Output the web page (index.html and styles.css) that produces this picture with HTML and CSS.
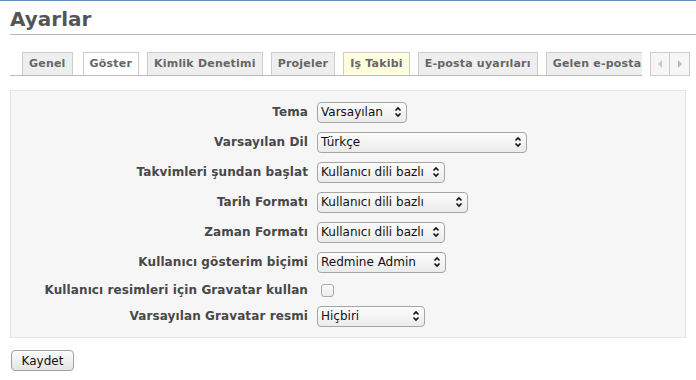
FILE: index.html
```html
<!DOCTYPE html>
<html lang="tr">

<head>
    <meta charset="UTF-8">
    <title>Ayarlar</title>
    <link rel="stylesheet" href="styles.css">
</head>

<body>
    <div class="topline"></div>

    <div id="content">
        <h2>Ayarlar</h2>

        <!-- Tabs -->
        <div class="tabs">
            <ul>
                <li><a>Genel</a></li>
                <li><a class="selected">Göster</a></li>
                <li><a>Kimlik Denetimi</a></li>
                <li><a>Projeler</a></li>
                <li><a class="highlight">Iş Takibi</a></li>
                <li><a>E-posta uyarıları</a></li>
                <li><a>Gelen e-posta</a></li>
            </ul>
            <div class="tab-buttons">
                <button class="tab-left"><svg width="6" height="8" viewBox="0 0 6 8"><path d="M5 0 L1 4 L5 8 Z" fill="#ccc"/></svg></button>
                <button class="tab-right"><svg width="6" height="8" viewBox="0 0 6 8"><path d="M1 0 L5 4 L1 8 Z" fill="#bbb"/></svg></button>
            </div>
        </div>

        <!-- Settings box -->
        <div class="box">
            <p class="row"><label>Tema</label><span class="select w89">Varsayılan<svg class="arr" viewBox="0 0 8 12"><path d="M1.5 4.5 L4 2 L6.5 4.5 M1.5 7.5 L4 10 L6.5 7.5" /></svg></span></p>
            <p class="row"><label>Varsayılan Dil</label><span class="select w209">Türkçe<svg class="arr" viewBox="0 0 8 12"><path d="M1.5 4.5 L4 2 L6.5 4.5 M1.5 7.5 L4 10 L6.5 7.5" /></svg></span></p>
            <p class="row"><label>Takvimleri şundan başlat</label><span class="select w127">Kullanıcı dili bazlı<svg class="arr" viewBox="0 0 8 12"><path d="M1.5 4.5 L4 2 L6.5 4.5 M1.5 7.5 L4 10 L6.5 7.5" /></svg></span></p>
            <p class="row"><label>Tarih Formatı</label><span class="select w150">Kullanıcı dili bazlı<svg class="arr" viewBox="0 0 8 12"><path d="M1.5 4.5 L4 2 L6.5 4.5 M1.5 7.5 L4 10 L6.5 7.5" /></svg></span></p>
            <p class="row"><label>Zaman Formatı</label><span class="select w127">Kullanıcı dili bazlı<svg class="arr" viewBox="0 0 8 12"><path d="M1.5 4.5 L4 2 L6.5 4.5 M1.5 7.5 L4 10 L6.5 7.5" /></svg></span></p>
            <p class="row"><label>Kullanıcı gösterim biçimi</label><span class="select w128">Redmine Admin<svg class="arr" viewBox="0 0 8 12"><path d="M1.5 4.5 L4 2 L6.5 4.5 M1.5 7.5 L4 10 L6.5 7.5" /></svg></span></p>
            <p class="row short"><label>Kullanıcı resimleri için Gravatar kullan</label><span class="checkbox"></span></p>
            <p class="row short"><label>Varsayılan Gravatar resmi</label><span class="select w107">Hiçbiri<svg class="arr" viewBox="0 0 8 12"><path d="M1.5 4.5 L4 2 L6.5 4.5 M1.5 7.5 L4 10 L6.5 7.5" /></svg></span></p>
        </div>

        <button class="submit">Kaydet</button>
    </div>
</body>

</html>
```

FILE: styles.css
```css
body {
    font-family: "DejaVu Sans", Verdana, sans-serif;
    font-size: 11px;
    color: #484848;
    margin: 0;
    padding: 0;
    background: #fff;
}

.topline {
    height: 1px;
    background-color: #628db6;
}

#content {
    padding: 0 0 0 10px;
}

h2 {
    font-size: 20px;
    font-weight: bold;
    color: #555;
    margin: 0;
    padding: 5px 0 2px 0;
    height: 26px;
    line-height: 26px;
    border-bottom: 1px solid #bbb;
}

/* Tabs */
.tabs {
    display: flex;
    margin-top: 17px;
    margin-right: 10px;
    height: 24px;
}

.tabs ul {
    display: flex;
    list-style: none;
    margin: 0;
    padding: 0 0 0 4px;
    border-bottom: 1px solid #bbb;
    overflow: hidden;
    white-space: nowrap;
    width: 628px;
    flex: none;
}

.tabs li {
    flex: none;
}

.tabs a {
    display: block;
    box-sizing: border-box;
    height: 24px;
    line-height: 21px;
    padding: 0 6px;
    margin-left: 8px;
    border: 1px solid #ccc;
    border-bottom: 1px solid #bbb;
    background-color: #eee;
    color: #666;
    font-weight: bold;
    letter-spacing: 0.2px;
}

.tabs a.selected {
    background-color: #fff;
    border-bottom: 1px solid #fff;
    margin-left: 10px;
}

.tabs a.highlight {
    background-color: #ffffdd;
}

.tab-buttons {
    display: flex;
    margin-left: 8px;
}

.tab-buttons button {
    width: 20px;
    height: 24px;
    margin: 0;
    padding: 0;
    border: 1px solid #ccc;
    background: #f6f6f6;
    display: flex;
    align-items: center;
    justify-content: center;
}

.tab-buttons .tab-right {
    border-left: none;
}

/* Box */
.box {
    margin: 14px 10px 0 0;
    padding: 6px 0 8px 0;
    background-color: #f6f6f6;
    border: 1px solid #e4e4e4;
}

.row {
    display: flex;
    align-items: center;
    margin: 0;
    height: 30px;
}

.row.short {
    height: 26px;
}

.row label {
    width: 297px;
    text-align: right;
    font-size: 12px;
    font-weight: bold;
    padding-right: 9px;
    letter-spacing: 0.1px;
    white-space: nowrap;
}

.select {
    box-sizing: border-box;
    display: flex;
    align-items: center;
    justify-content: space-between;
    height: 21px;
    padding: 0 4px 0 3px;
    border: 1px solid #a5a5a5;
    border-radius: 4px;
    background: linear-gradient(#fcfcfc, #ebebeb);
    color: #111;
    font-size: 12px;
}

.arr {
    width: 8px;
    height: 12px;
    fill: none;
    stroke: #111;
    stroke-width: 1.6;
}

.w89 { width: 90px; }
.w209 { width: 210px; }
.w127 { width: 128px; }
.w128 { width: 129px; }
.w150 { width: 151px; }
.w107 { width: 108px; }

.checkbox {
    box-sizing: border-box;
    width: 13px;
    height: 13px;
    margin-left: 4px;
    border: 1px solid #aaa;
    border-radius: 3px;
    background: linear-gradient(#fbfbfb, #ececec);
}

.submit {
    display: block;
    margin: 12px 0 0 1px;
    height: 21px;
    width: 63px;
    padding: 0;
    font-family: "DejaVu Sans", Verdana, sans-serif;
    font-size: 12px;
    color: #111;
    border: 1px solid #a0a0a0;
    border-radius: 4px;
    background: linear-gradient(#fcfcfc, #e4e4e4);
}
```
